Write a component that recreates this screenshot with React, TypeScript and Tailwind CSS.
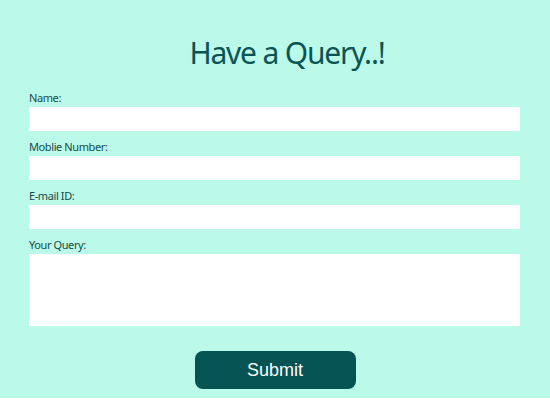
export default function App() {
  const fields = ["Name:", "Moblie Number:", "E-mail ID:"];

  return (
    <div className="w-[550px] bg-[#bbf9e8] px-[29px] pt-[35px] pb-[9px] font-['Noto_Sans',sans-serif]">
      <h1 className="pl-6 text-center text-[30px] leading-[36px] tracking-[-1.2px] text-[#0b5455]">Have a Query..!</h1>

      <form className="mt-5 flex flex-col">
        {fields.map((label, i) => (
          <div key={label} className={i === 0 ? "" : "mt-[9px]"}>
            <label className="mb-[2px] block text-[11px] leading-[14px] tracking-[-0.4px] text-[#164a4a]">{label}</label>
            <input type="text" className="block h-6 w-[491px] border-0 bg-white outline-none" />
          </div>
        ))}

        <div className="mt-[9px]">
          <label className="mb-[2px] block text-[11px] leading-[14px] tracking-[-0.4px] text-[#164a4a]">Your Query:</label>
          <textarea className="block h-[72px] w-[491px] resize-none border-0 bg-white outline-none" />
        </div>

        <div className="mt-[25px] flex justify-center">
          <button
            type="button"
            className="h-[38px] w-[161px] rounded-[8px] bg-[#065353] font-['Liberation_Sans',Arial,sans-serif] text-[18px] text-white"
          >
            Submit
          </button>
        </div>
      </form>
    </div>
  );
}
